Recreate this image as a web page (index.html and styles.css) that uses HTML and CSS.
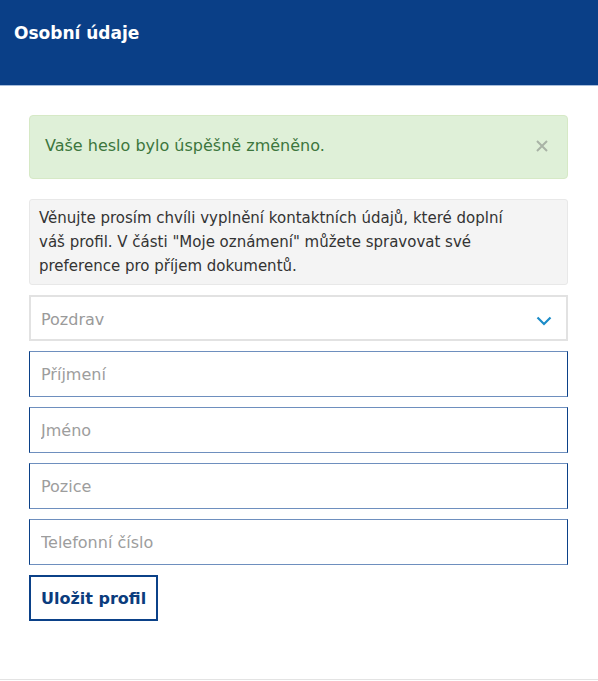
FILE: index.html
```html
<!DOCTYPE html>
<html lang="cs">
<head>
    <meta charset="UTF-8">
    <meta name="viewport" content="width=device-width, initial-scale=1.0">
    <title>Osobní údaje</title>
    <link rel="stylesheet" href="styles.css">
</head>
<body>
    <header class="page-header">
        <h1>Osobní údaje</h1>
    </header>

    <main class="profile">
        <div class="alert">
            <span>Vaše heslo bylo úspěšně změněno.</span>
            <button class="alert-close" aria-label="Zavřít">
                <svg width="12" height="12" viewBox="0 0 12 12">
                    <path d="M1 1 L11 11 M11 1 L1 11" stroke="#a9b3a6" stroke-width="2"/>
                </svg>
            </button>
        </div>

        <p class="info">
            Věnujte prosím chvíli vyplnění kontaktních údajů, které doplní váš profil. V části "Moje oznámení" můžete spravovat své preference pro příjem dokumentů.
        </p>

        <form class="profile-form">
            <div class="select">
                <span>Pozdrav</span>
                <svg width="16" height="10" viewBox="0 0 16 10">
                    <path d="M1.5 1.5 L8 8 L14.5 1.5" fill="none" stroke="#1c8cc8" stroke-width="2.2"/>
                </svg>
            </div>
            <input type="text" class="field" placeholder="Příjmení">
            <input type="text" class="field" placeholder="Jméno">
            <input type="text" class="field" placeholder="Pozice">
            <input type="text" class="field" placeholder="Telefonní číslo">
            <button type="button" class="save">Uložit profil</button>
        </form>
    </main>
</body>
</html>
```

FILE: styles.css
```css
body {
    margin: 0;
    font-family: "DejaVu Sans", Verdana, sans-serif;
    font-size: 16px;
    color: #333;
    background: #fff;
}

.page-header {
    background-color: #0a3f87;
    height: 86px;
    border-bottom: 1px solid #a7bddb;
    box-sizing: border-box;
    padding: 23px 14px 0;
}

.page-header h1 {
    margin: 0;
    color: #fff;
    font-size: 17px;
    font-weight: bold;
    line-height: 20px;
}

.profile {
    padding: 29px 30px 58px 29px;
    border-bottom: 1px solid #e3e3e3;
}

.alert {
    display: flex;
    justify-content: space-between;
    align-items: center;
    background-color: #dff0d8;
    border: 1px solid #d6e9c6;
    border-radius: 4px;
    color: #3c763d;
    padding: 18px 19px 20px 15px;
    line-height: 24px;
    margin-bottom: 20px;
}

.alert-close {
    background: none;
    border: none;
    padding: 0;
    display: flex;
    cursor: pointer;
}

.info {
    margin: 0 0 10px;
    background-color: #f4f4f4;
    border: 1px solid #e8e8e8;
    border-radius: 3px;
    padding: 6px 45px 6px 9px;
    font-size: 15px;
    line-height: 24px;
}

.profile-form {
    display: flex;
    flex-direction: column;
    align-items: flex-start;
    gap: 10px;
}

.select {
    display: flex;
    justify-content: space-between;
    align-items: center;
    width: 100%;
    height: 46px;
    box-sizing: border-box;
    border: 2px solid #e2e2e2;
    padding: 2px 14px 0 10px;
    color: #9a9a9a;
}

.select svg {
    margin-top: 4px;
}

.field {
    width: 100%;
    height: 46px;
    box-sizing: border-box;
    border: 1px solid #0b4188;
    border-top-color: #6e8fbe;
    border-bottom-color: #6e8fbe;
    padding: 0 11px;
    font-family: inherit;
    font-size: 16px;
    color: #333;
    outline: none;
}

.field::placeholder {
    color: #9d9d9d;
}

.save {
    height: 46px;
    padding: 0 10px;
    background: #fff;
    border: 2px solid #0b4188;
    color: #0b3c7d;
    font-family: inherit;
    font-size: 16px;
    font-weight: bold;
    cursor: pointer;
}
```
